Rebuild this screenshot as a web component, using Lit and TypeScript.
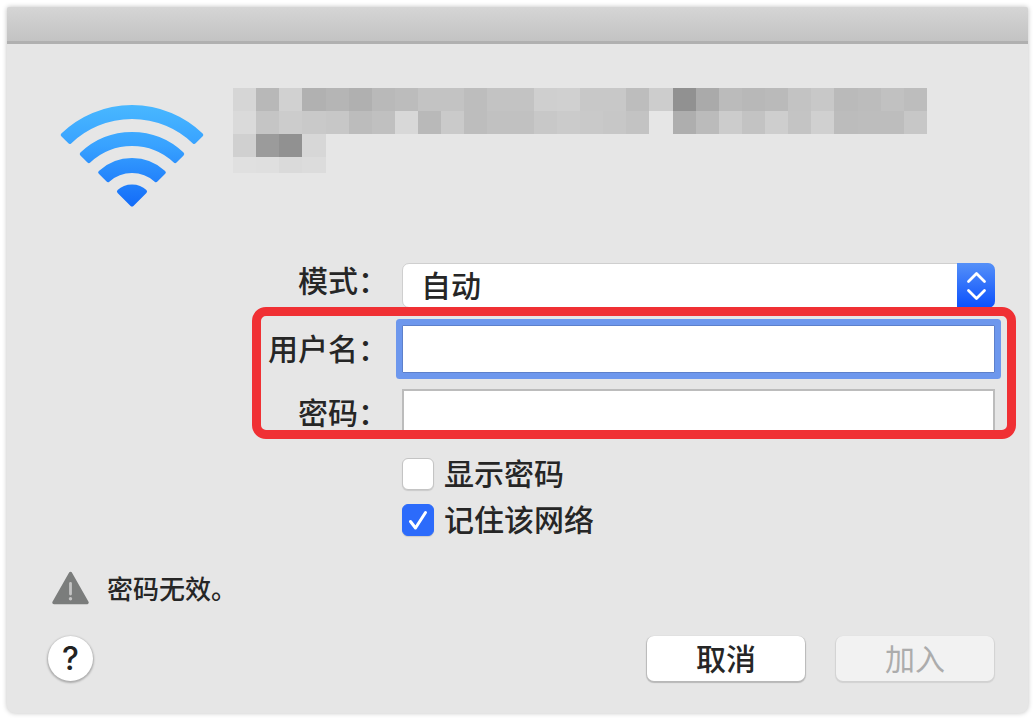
import { LitElement, html, css, svg } from "lit";
import { customElement, state } from "lit/decorators.js";

/** Grey levels of the pixelated network name, row by row. */
const MOSAIC: string[][] = [
  "d6 b8 d1 b1 b5 b0 b9 bc c3 c3 bd c3 c3 cf d0 c8 c8 bd cd 91 aa bb b8 ba c3 c8 ba bc c1 bd",
  "da c5 cc c9 c7 bc c0 d8 b9 ca bd c1 c1 c8 cb c9 c7 c3 e6 ae bb cc c3 ce c4 d0 bc bd bd c7",
  "d0 9b 91 d7",
  "e0 df da dc",
].map((row) => row.split(" "));

const APEX_X = 73;
const APEX_Y = 103;
const ROUND = 2;

/** A quarter-circle band that opens upwards from the apex of the signal icon. */
function band(inner: number, outer: number) {
  const i = inner + ROUND;
  const o = outer - ROUND;
  const inset = ROUND * Math.SQRT2;
  const at = (r: number, side: number) => {
    const k = Math.sqrt(r * r - (inset * inset) / 2) / Math.SQRT2;
    return `${(APEX_X + side * (k - inset / 2)).toFixed(2)} ${(APEX_Y - k - inset / 2).toFixed(2)}`;
  };
  return `M${at(i, -1)}L${at(o, -1)}A${o} ${o} 0 0 1 ${at(o, 1)}L${at(i, 1)}A${i} ${i} 0 0 0 ${at(i, -1)}Z`;
}

@customElement("signal-icon")
export class SignalIcon extends LitElement {
  static styles = css`
    :host {
      display: block;
    }
    .icon {
      display: block;
      width: 146px;
      height: 104px;
    }
    .shape {
      stroke-width: 4;
      stroke-linejoin: round;
    }
  `;

  render() {
    const bands = [band(88, 102), band(61, 75), band(34, 49)];
    return html`<svg class="icon" viewBox="0 0 146 104" aria-hidden="true">
      <defs>
        <linearGradient id="sky" gradientUnits="userSpaceOnUse" x1="0" y1="0" x2="0" y2="104">
          <stop offset="0" stop-color="#49b8ff" />
          <stop offset="0.4" stop-color="#38a2ff" />
          <stop offset="0.8" stop-color="#1f7dfb" />
          <stop offset="1" stop-color="#126af8" />
        </linearGradient>
      </defs>
      ${bands.map((d) => svg`<path class="shape" d=${d} fill="url(#sky)" stroke="url(#sky)" />`)}
      <path
        class="shape"
        d="M73 100.500L60 87.500Q65 82.500 73 82.500T86 87.500Z"
        fill="url(#sky)"
        stroke="url(#sky)"
      />
    </svg>`;
  }
}

@customElement("app-root")
export class AppRoot extends LitElement {
  static styles = css`
    :host {
      display: block;
      box-sizing: border-box;
      min-height: 100vh;
      padding: 7px;
      background: #fff;
      color: #262626;
      font-family: "Noto Sans CJK SC", sans-serif;
      font-size: 30px;
      font-weight: 500;
      line-height: 32px;
    }
    .dialog {
      border-radius: 2px 2px 8px 8px;
      background: #e6e6e6;
      box-shadow: 0 0 5px rgba(0, 0, 0, 0.25);
    }
    .titlebar {
      box-sizing: border-box;
      height: 37px;
      border-bottom: 3px solid #b0b0b0;
      border-radius: 2px 2px 0 0;
      background: linear-gradient(#d5d5d5, #c3c3c3);
    }
    .body {
      padding: 44px 33px 32px 41px;
    }
    .header {
      display: flex;
      align-items: flex-start;
      gap: 28px;
      padding: 0 68px 0 11px;
    }
    .signal {
      flex: none;
      padding-top: 16px;
    }
    .mosaic {
      display: grid;
      flex: 1;
      grid-template-columns: repeat(30, 1fr);
      grid-template-rows: 23px 23px 23px 16px;
    }
    .first {
      grid-column-start: 1;
    }
    .form {
      display: grid;
      grid-template-columns: 120px 1fr;
      column-gap: 14px;
      margin: 55px 0 0 220px;
    }
    .row {
      display: grid;
      grid-column: 1 / -1;
      grid-template-columns: subgrid;
      align-items: center;
    }
    .top {
      align-items: start;
    }
    .label {
      padding-bottom: 4px;
      text-align: right;
      white-space: nowrap;
    }
    .credentials {
      position: relative;
      display: grid;
      grid-column: 1 / -1;
      grid-template-columns: subgrid;
      row-gap: 16px;
      margin-top: 17px;
    }
    .highlight {
      position: absolute;
      inset: -18px -21px -2px -16px;
      border: 9px solid #f03034;
      border-radius: 14px;
      pointer-events: none;
    }
    .picker {
      position: relative;
      display: grid;
    }
    .select {
      box-sizing: border-box;
      width: 100%;
      height: 45px;
      padding: 0 50px 4px 18px;
      border: 1px solid #cfcfcf;
      border-radius: 7px;
      appearance: none;
      outline: none;
      background: #fff;
      color: inherit;
      font: inherit;
    }
    .stepper {
      position: absolute;
      top: 0;
      right: 0;
      width: 38px;
      height: 45px;
      border-radius: 0 7px 7px 0;
      background: linear-gradient(#5590f8, #0a50fd);
      pointer-events: none;
    }
    .field {
      box-sizing: border-box;
      width: 100%;
      height: 48px;
      padding: 0 8px;
      border: 2px solid #bcbcbc;
      border-radius: 0;
      outline: none;
      background: #fff;
      color: inherit;
      font: inherit;
    }
    .active {
      border: 1px solid #5d80cb;
      box-shadow: 0 0 0 6px #6d97ed;
      border-radius: 1px;
    }
    .options {
      display: grid;
      grid-column: 2;
      justify-items: start;
      row-gap: 14px;
      margin-top: 21px;
    }
    .option {
      display: flex;
      align-items: center;
      gap: 10px;
      height: 32px;
    }
    .caption {
      padding-bottom: 4px;
    }
    .check {
      box-sizing: border-box;
      width: 32px;
      height: 32px;
      margin: 0;
      border: 1px solid #c4c4c4;
      border-radius: 6px;
      appearance: none;
      background: #fff;
      box-shadow: 0 1px 1px rgba(0, 0, 0, 0.12);
    }
    .check:checked {
      border-color: #2c6bfb;
      background: #2c6bfb;
    }
    .box {
      position: relative;
      display: flex;
    }
    .tick {
      position: absolute;
      inset: 0;
      pointer-events: none;
    }
    .warning {
      display: flex;
      align-items: center;
      gap: 17px;
      height: 34px;
      margin: 35px 0 31px 3px;
      font-size: 26px;
    }
    .footer {
      display: flex;
      align-items: center;
      gap: 31px;
      padding-right: 1px;
    }
    .help {
      width: 45px;
      height: 45px;
      margin-right: auto;
      padding: 0;
      border: 0;
      border-radius: 50%;
      background: #fff;
      box-shadow: 0 1px 2px 1px rgba(0, 0, 0, 0.25);
      color: #222;
      font: 500 32px / 45px Inter, sans-serif;
    }
    .button {
      box-sizing: border-box;
      width: 158px;
      height: 45px;
      padding: 0 0 4px;
      border: 0;
      border-radius: 7px;
      background: #fff;
      box-shadow: 0 1px 1px 1px rgba(0, 0, 0, 0.2);
      color: inherit;
      font: inherit;
    }
    .button:disabled {
      background: #f2f2f2;
      box-shadow: 0 1px 1px 1px rgba(0, 0, 0, 0.09);
      color: #acacac;
      font-weight: 400;
    }
  `;

  @state() private showPassword = false;

  private toggleShow(e: Event) {
    this.showPassword = (e.target as HTMLInputElement).checked;
  }

  render() {
    return html`
      <main class="dialog">
        <div class="titlebar"></div>
        <div class="body">
          <div class="header">
            <signal-icon class="signal"></signal-icon>
            <div class="mosaic">
              ${MOSAIC.map((row) =>
                row.map(
                  (level, i) =>
                    html`<span class=${i === 0 ? "first" : "cell"} style="background:#${level.repeat(3)}"></span>`
                )
              )}
            </div>
          </div>

          <div class="form">
            <div class="row top">
              <label class="label" for="mode">模式：</label>
              <div class="picker">
                <select class="select" id="mode">
                  <option>自动</option>
                </select>
                <svg class="stepper" viewBox="0 0 38 45" aria-hidden="true">
                  <path
                    d="M11.500 18.500L19.500 10.500L27.500 18.500M11.500 27.500L19.500 35.500L27.500 27.500"
                    fill="none"
                    stroke="#fff"
                    stroke-width="2.800"
                    stroke-linecap="round"
                    stroke-linejoin="round"
                  />
                </svg>
              </div>
            </div>

            <div class="credentials">
              <div class="row">
                <label class="label" for="user">用户名：</label>
                <input class="field active" id="user" type="text" />
              </div>
              <div class="row">
                <label class="label" for="password">密码：</label>
                <input class="field" id="password" type=${this.showPassword ? "text" : "password"} />
              </div>
              <div class="highlight"></div>
            </div>

            <div class="options">
              <label class="option">
                <input class="check" type="checkbox" @change=${this.toggleShow} />
                <span class="caption">显示密码</span>
              </label>
              <label class="option">
                <span class="box">
                  <input class="check" type="checkbox" checked />
                  <svg class="tick" viewBox="0 0 32 32" aria-hidden="true">
                    <path
                      d="M8.500 17.500L13.500 24L23.500 8.500"
                      fill="none"
                      stroke="#fff"
                      stroke-width="3"
                      stroke-linecap="round"
                      stroke-linejoin="round"
                    />
                  </svg>
                </span>
                <span class="caption">记住该网络</span>
              </label>
            </div>
          </div>

          <div class="warning" role="alert">
            <svg width="39" height="34" viewBox="0 0 39 34" aria-hidden="true">
              <path
                d="M19.500 2.500L36 31.500H3Z"
                fill="#7b7d7c"
                stroke="#7b7d7c"
                stroke-width="3.500"
                stroke-linejoin="round"
              />
              <path d="M19.500 12.500V23" stroke="#c4c4c4" stroke-width="2.800" stroke-linecap="round" />
              <circle cx="19.500" cy="27.800" r="1.700" fill="#c4c4c4" />
            </svg>
            <span>密码无效。</span>
          </div>

          <div class="footer">
            <button class="help" type="button" aria-label="?">?</button>
            <button class="button" type="button">取消</button>
            <button class="button" type="button" disabled>加入</button>
          </div>
        </div>
      </main>
    `;
  }
}
